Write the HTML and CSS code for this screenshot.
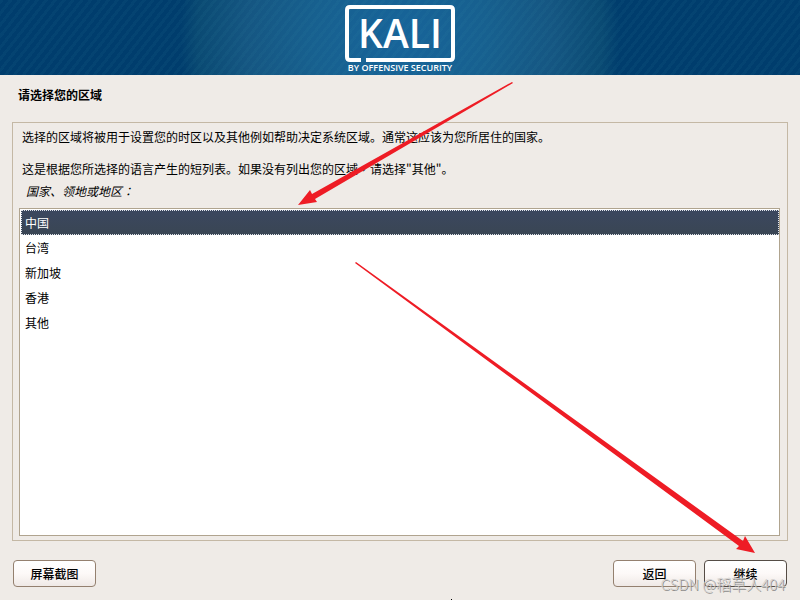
FILE: index.html
```html
<!DOCTYPE html>
<html lang="zh-CN">
<head>
  <meta charset="utf-8">
  <title>请选择您的区域</title>
  <link rel="stylesheet" href="styles.css">
</head>
<body>

<header class="banner">
  <svg class="logo" width="120" height="75" viewBox="340 0 120 75">
    <path d="M361 60H350Q347 60 347 57V10Q347 7 350 7H450Q453 7 453 10V57Q453 60 450 60H366" fill="none" stroke="#fff" stroke-width="4"/>
    <text class="logo-name" x="400" y="48">KALI</text>
    <text class="logo-by" x="400" y="71">BY OFFENSIVE SECURITY</text>
  </svg>
</header>

<form class="installer">
  <h1>请选择您的区域</h1>

  <div class="panel">
    <p>选择的区域将被用于设置您的时区以及其他例如帮助决定系统区域。通常这应该为您所居住的国家。</p>
    <p>这是根据您所选择的语言产生的短列表。如果没有列出您的区域<span class="mark" lang="zh-TW">，</span>请选择"其他"。</p>
    <label for="region">国家、领地或地区<span class="mark" lang="zh-TW">：</span></label>
    <select id="region" name="region" size="5">
      <option selected>中国</option>
      <option>台湾</option>
      <option>新加坡</option>
      <option>香港</option>
      <option>其他</option>
    </select>
  </div>

  <div class="buttons">
    <button type="button">屏幕截图</button>
    <button type="button" class="back">返回</button>
    <button type="button" class="next">继续</button>
  </div>
</form>

<svg class="arrows" viewBox="0 0 800 600" preserveAspectRatio="none">
  <path d="M512 82L312 194L310 190L298 205L317 202L315 199L513 83Z" fill="#ee1c25"/>
  <path d="M355 263L739 546L736 549L755 553L745 536L743 541L356 262Z" fill="#ee1c25"/>
  <rect x="451" y="599" width="1" height="1"/>
</svg>
<div class="watermark">CSDN @稻草人404</div>

</body>
</html>
```

FILE: styles.css
```css
* {
  box-sizing: border-box;
}
body {
  margin: 0;
  min-height: 100vh;
  display: flex;
  flex-direction: column;
  position: relative;
  background: #efebe7;
  color: #000;
  font: 12px/16px "Noto Sans CJK SC", sans-serif;
}
.banner {
  height: 75px;
  display: flex;
  justify-content: center;
  background:
    repeating-linear-gradient(128deg, rgba(60, 150, 170, 0.07) 0 3px, transparent 3px 7px),
    radial-gradient(circle 220px at 50% 38px, #17649a 0, #17608f 40%, #155682 70%, #0a4a73 92%, #003d6d 100%);
}
.logo-name,
.logo-by {
  fill: #fff;
  text-anchor: middle;
  font-family: "Open Sans", sans-serif;
}
.logo-name {
  font-size: 39px;
  font-weight: 600;
}
.logo-by {
  font-size: 9px;
  font-weight: 600;
}
.installer {
  flex: 1;
  display: flex;
  flex-direction: column;
  padding: 12px 12px 13px;
}
h1 {
  margin: 0 6px 19px;
  font-size: 12px;
  line-height: 16px;
}
.panel {
  flex: 1;
  display: flex;
  flex-direction: column;
  padding: 6px 7px 4px 6px;
  border: 1px solid #c4b8a5;
}
.panel p {
  margin: 0 3px 16px;
}
.panel p + p {
  margin-bottom: 6px;
}
.panel label {
  margin: 0 7px 9px;
  font-style: italic;
}
.mark {
  font-family: "Noto Sans CJK TC", sans-serif;
}
select {
  flex: 1;
  padding: 1px 0 1px 1px;
  border: 1px solid #b0a48f;
  border-radius: 0;
  outline: 0;
  background: #fff;
  color: #000;
  font: inherit;
}
option {
  min-height: 25px;
  padding: 4px 4px 3px;
}
option:checked {
  background: linear-gradient(#3b475f, #3a4654);
  color: #fff;
  outline: 1px dotted #dfe3ea;
  outline-offset: -1px;
}
.buttons {
  display: flex;
  gap: 8px;
  margin-top: 19px;
  padding: 0 1px;
}
button {
  width: 83px;
  height: 27px;
  padding: 0;
  border: 1px solid #94806f;
  border-radius: 4px;
  background: linear-gradient(#fff, #fdf9f8 50%, #efe9e6);
  color: #000;
  font: inherit;
  font-weight: 500;
}
.back {
  margin-left: auto;
}
.next {
  border-color: #554c45;
}
.arrows {
  position: absolute;
  top: 0;
  left: 0;
  width: 100%;
  height: 100%;
  pointer-events: none;
}
.watermark {
  position: absolute;
  right: 15px;
  bottom: 4px;
  color: #d4d2d0;
  font-size: 15px;
  font-weight: 300;
  line-height: 24px;
  text-shadow: 1px 1px 0 #8d8b8a;
}
```
